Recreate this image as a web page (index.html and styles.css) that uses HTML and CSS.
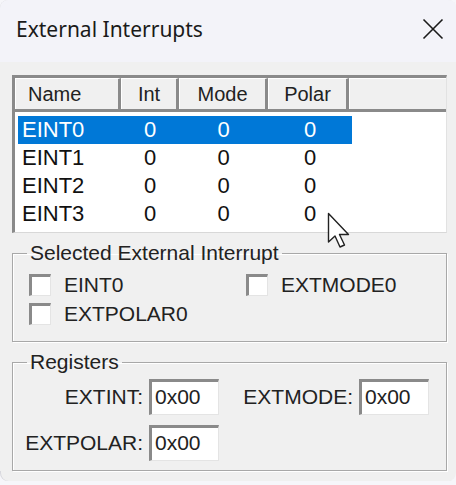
FILE: index.html
```html
<!DOCTYPE html>
<html>
<head>
<meta charset="utf-8">
<link rel="stylesheet" href="styles.css">
</head>
<body>
<div class="window">
  <div class="titlebar">
    <span class="title">External Interrupts</span>
    <svg class="close" width="22" height="22" viewBox="0 0 22 22"><path d="M1.5 1.5 L20.5 20.5 M20.5 1.5 L1.5 20.5" stroke="#1a1a1a" stroke-width="1.6" fill="none"/></svg>
  </div>
  <div class="content">
    <div class="listview">
      <div class="header">
        <div class="hcell c-name">Name</div>
        <div class="hcell c-int">Int</div>
        <div class="hcell c-mode">Mode</div>
        <div class="hcell c-polar">Polar</div>
        <div class="hcell c-rest"></div>
      </div>
      <div class="rows">
        <div class="row selected"><span class="c-name">EINT0</span><span class="c-int">0</span><span class="c-mode">0</span><span class="c-polar">0</span></div>
        <div class="row"><span class="c-name">EINT1</span><span class="c-int">0</span><span class="c-mode">0</span><span class="c-polar">0</span></div>
        <div class="row"><span class="c-name">EINT2</span><span class="c-int">0</span><span class="c-mode">0</span><span class="c-polar">0</span></div>
        <div class="row"><span class="c-name">EINT3</span><span class="c-int">0</span><span class="c-mode">0</span><span class="c-polar">0</span></div>
      </div>
    </div>

    <fieldset class="group group-sel">
      <legend>Selected External Interrupt</legend>
      <div class="checks">
        <label class="check"><span class="box"></span>EINT0</label>
        <label class="check"><span class="box"></span>EXTMODE0</label>
        <label class="check"><span class="box"></span>EXTPOLAR0</label>
      </div>
    </fieldset>

    <fieldset class="group group-reg">
      <legend>Registers</legend>
      <div class="regs">
        <span class="rlabel">EXTINT:</span><span class="tbox">0x00</span>
        <span class="rlabel">EXTMODE:</span><span class="tbox">0x00</span>
        <span class="rlabel">EXTPOLAR:</span><span class="tbox">0x00</span>
      </div>
    </fieldset>
  </div>
  <svg class="cursor" width="30" height="40" viewBox="0 0 30 40"><path d="M1.5 1.5 L1.5 30 L8 24 L13 35 L17.5 33 L12.5 22.5 L21.5 22.5 Z" fill="#ffffff" stroke="#222" stroke-width="1.4" stroke-linejoin="round"/></svg>
</div>
</body>
</html>
```

FILE: styles.css
```css
html, body {
  margin: 0;
  padding: 0;
  background: #f6f6fa;
}
.window {
  position: relative;
  width: 456px;
  height: 481px;
  background: #f0f0f0;
  border-radius: 8px;
  overflow: hidden;
  box-shadow: inset 1px 0 0 #d8d8de;
}
.titlebar {
  height: 62px;
  background: #f3f3f9;
  display: flex;
  align-items: flex-start;
  justify-content: space-between;
  padding: 16px 12px 0 16px;
  box-sizing: border-box;
}
.title {
  font-family: "Noto Sans", "Open Sans", sans-serif;
  font-size: 21px;
  color: #1a1a1a;
  line-height: 26px;
}
.close {
  margin-top: 2px;
}
.content {
  background: #f0f0f0;
  padding: 13px 9px 0 12px;
  font-family: "Liberation Sans", Arial, sans-serif;
  font-size: 22px;
  color: #111;
  display: flex;
  flex-direction: column;
}
.listview {
  height: 158px;
  background: #fff;
  border-top: 3px solid #8a8a8a;
  border-left: 3px solid #8a8a8a;
  border-right: 1px solid #e2e2e2;
  border-bottom: 1px solid #d8d8d8;
  box-sizing: border-box;
  overflow: hidden;
}
.header {
  display: flex;
  height: 34px;
  background: #f0f0f0;
  border-bottom: 3px solid #8a8a8a;
  box-sizing: border-box;
  font-size: 20px;
  color: #222;
}
.hcell {
  height: 100%;
  box-sizing: border-box;
  border-right: 3px solid #8a8a8a;
  border-left: 1px solid #ffffff;
  border-top: 1px solid #ffffff;
  display: flex;
  align-items: center;
  line-height: 28px;
}
.header .c-name { width: 106px; padding-left: 12px; }
.header .c-int { width: 58px; justify-content: center; }
.header .c-mode { width: 89px; justify-content: center; }
.header .c-polar { width: 81px; justify-content: center; }
.header .c-rest { flex: 1; border-right: none; }
.rows {
  padding: 4px 0 0 3px;
}
.row {
  display: flex;
  height: 28px;
  line-height: 28px;
  width: 334px;
}
.row span { display: block; }
.row .c-name { width: 103px; padding-left: 4px; box-sizing: border-box; }
.row .c-int { width: 58px; text-align: center; }
.row .c-mode { width: 89px; text-align: center; }
.row .c-polar { width: 84px; text-align: center; }
.row.selected {
  background: #0078d7;
  color: #ffffff;
}
.group {
  margin: 0;
  padding: 0;
  border: 1px solid #a8a8a8;
  box-shadow: 1px 1px 0 #ffffff, inset 1px 1px 0 #ffffff;
  min-width: 0;
}
.group legend {
  margin-left: 14px;
  padding: 0 3px;
  font-size: 21px;
  line-height: 24px;
  color: #222;
}
.group-sel {
  margin-top: 8px;
  height: 101px;
  box-sizing: border-box;
}
.checks {
  display: grid;
  grid-template-columns: 217px auto;
  row-gap: 6px;
  padding: 8px 0 0 16px;
}
.check {
  display: flex;
  align-items: center;
  gap: 13px;
  height: 23px;
  line-height: 23px;
  font-size: 21px;
  color: #222;
}
.box {
  width: 22px;
  height: 22px;
  box-sizing: border-box;
  background: #fff;
  border-top: 3px solid #8a8a8a;
  border-left: 3px solid #8a8a8a;
  border-right: 1px solid #e4e4e4;
  border-bottom: 1px solid #e4e4e4;
}
.group-reg {
  margin-top: 8px;
  height: 121px;
  box-sizing: border-box;
}
.regs {
  display: grid;
  grid-template-columns: 123px 70px 128px 70px;
  grid-auto-rows: 36px;
  column-gap: 6px;
  row-gap: 10px;
  padding: 5px 0 0 7px;
  align-items: center;
}
.rlabel {
  text-align: right;
  font-size: 21px;
  color: #222;
}
.tbox {
  height: 36px;
  box-sizing: border-box;
  background: #fff;
  border-top: 3px solid #8a8a8a;
  border-left: 3px solid #8a8a8a;
  border-right: 1px solid #e4e4e4;
  border-bottom: 1px solid #e4e4e4;
  padding-left: 3px;
  font-size: 21px;
  line-height: 30px;
  color: #222;
}
.cursor {
  position: absolute;
  left: 327px;
  top: 212px;
}
```
